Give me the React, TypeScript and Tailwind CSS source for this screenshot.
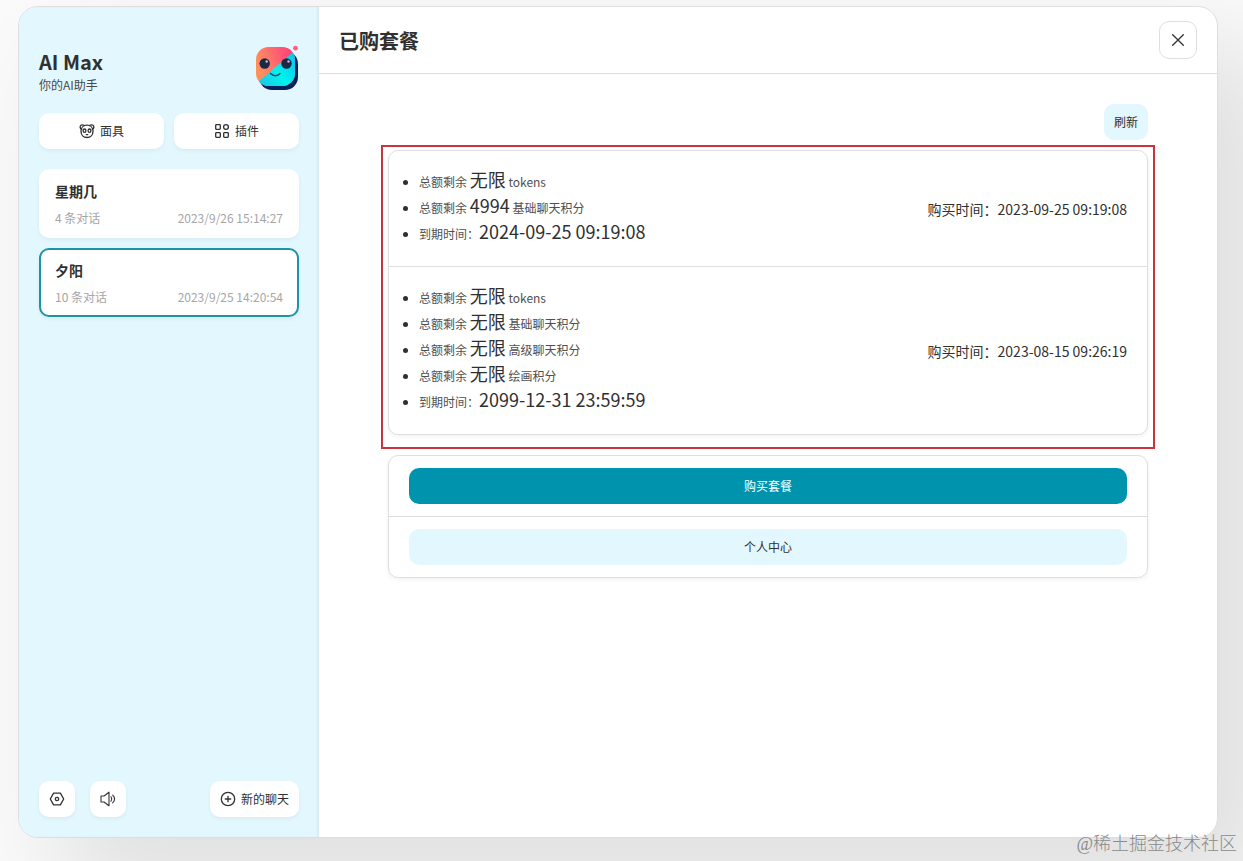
import type { ReactNode } from "react";

const IconButton = ({
  icon,
  text,
  className = "",
}: {
  icon?: ReactNode;
  text?: string;
  className?: string;
}) => (
  <button
    className={`flex h-9 items-center justify-center gap-[5px] rounded-[10px] text-xs ${className}`}
  >
    {icon}
    {text && <span>{text}</span>}
  </button>
);

const svgProps = {
  width: 16,
  height: 16,
  viewBox: "0 0 16 16",
  fill: "none",
  stroke: "#333",
  strokeWidth: 1.33,
  strokeLinecap: "round" as const,
  strokeLinejoin: "round" as const,
};

const MaskIcon = () => (
  <svg {...svgProps}>
    <path d="M2.7 6.2C1.300 5.600 .900 4.400 1.300 3.200C1.900 1.700 4 1.400 5.300 2.600" />
    <path d="M13.300 6.200C14.700 5.600 15.100 4.400 14.700 3.200C14.100 1.700 12 1.400 10.700 2.600" />
    <path d="M8 2.200C4.500 2.200 2 4.700 2 8.200C2 12 4.500 14.500 8 14.500C11.500 14.500 14 12 14 8.200C14 4.700 11.500 2.200 8 2.200Z" />
    <ellipse cx="5.500" cy="7.700" rx="1.400" ry="1.700" />
    <ellipse cx="10.500" cy="7.700" rx="1.400" ry="1.700" />
    <path d="M7.300 11.600H8.700" />
  </svg>
);

const PluginIcon = () => (
  <svg {...svgProps}>
    <rect x="1.700" y="1.700" width="4.600" height="4.600" rx=".7" />
    <rect x="1.700" y="9.700" width="4.600" height="4.600" rx=".7" />
    <circle cx="12" cy="4" r="2.400" />
    <rect x="9.700" y="9.700" width="4.600" height="4.600" rx=".7" />
  </svg>
);

const SettingsIcon = () => (
  <svg {...svgProps}>
    <path d="M4.600 2.200H11.400L14.700 8L11.400 13.800H4.600L1.300 8Z" />
    <circle cx="8" cy="8" r="1.700" />
  </svg>
);

const SoundIcon = () => (
  <svg {...svgProps} strokeWidth={1.1}>
    <path d="M1 5H4L9 1.200V14.800L4 11H1Z" />
    <path d="M11 5.800Q12.500 8 11 10.200" />
    <path d="M12.700 4.200Q16.500 8 12.700 11.800" />
  </svg>
);

const AddIcon = () => (
  <svg {...svgProps}>
    <circle cx="8" cy="8" r="6.700" />
    <path d="M8 5.300V10.700M5.300 8H10.700" />
  </svg>
);

const CloseIcon = () => (
  <svg {...svgProps}>
    <path d="M2.700 2.700L13.300 13.300M13.300 2.700L2.700 13.300" />
  </svg>
);

const Logo = () => (
  <svg className="-mt-px" width="44" height="46" viewBox="0 0 44 46">
    <defs>
      <linearGradient id="warm" x1="0" y1="0.3" x2="1" y2="0">
        <stop offset="0" stopColor="#ff925c" />
        <stop offset=".45" stopColor="#ff6470" />
        <stop offset="1" stopColor="#ff2b7d" />
      </linearGradient>
      <linearGradient id="cool" x1="0" y1="1" x2="1" y2="0.2">
        <stop offset="0" stopColor="#26b9e8" />
        <stop offset=".5" stopColor="#00f2ee" />
        <stop offset="1" stopColor="#10bdea" />
      </linearGradient>
      <clipPath id="face">
        <rect x="1" y="3" width="39" height="39" rx="12.500" />
      </clipPath>
    </defs>
    <rect x="4" y="7" width="39" height="39" rx="13" fill="#08205c" />
    <g clipPath="url(#face)">
      <rect width="44" height="46" fill="url(#warm)" />
      <path d="M44 3L3 38V46H44Z" fill="url(#cool)" />
    </g>
    <circle cx="9.700" cy="19.500" r="5.200" fill="#1b2947" />
    <circle cx="31.500" cy="19.500" r="5.200" fill="#1b2947" />
    <circle cx="11.700" cy="17.500" r="1.200" fill="#b9c3d6" />
    <circle cx="33.500" cy="17.500" r="1.200" fill="#b9c3d6" />
    <path
      d="M15.500 29.500Q20.500 34 25 29.500"
      fill="none"
      stroke="#204068"
      strokeWidth="1.500"
      strokeLinecap="round"
    />
    <circle cx="40.500" cy="4.200" r="2.400" fill="#ff5d83" />
  </svg>
);

const ChatItem = ({
  title,
  count,
  time,
  selected,
}: {
  title: string;
  count: number;
  time: string;
  selected?: boolean;
}) => (
  <div
    className={`h-[69px] rounded-[10px] border-2 bg-white px-3.5 pt-2.5 shadow-[0_2px_4px_rgba(0,0,0,0.05)] ${
      selected ? "border-[#1d93a3]" : "border-white"
    }`}
  >
    <div className="text-sm leading-5 font-bold">{title}</div>
    <div className="mt-[9px] flex justify-between text-xs leading-4 text-[#a6a6a6]">
      <span>{count} 条对话</span>
      <span>{time}</span>
    </div>
  </div>
);

type Plan = {
  quotas: { amount: string; unit: string }[];
  expires: string;
  bought: string;
};

const plans: Plan[] = [
  {
    quotas: [
      { amount: "无限", unit: "tokens" },
      { amount: "4994", unit: "基础聊天积分" },
    ],
    expires: "2024-09-25 09:19:08",
    bought: "2023-09-25 09:19:08",
  },
  {
    quotas: [
      { amount: "无限", unit: "tokens" },
      { amount: "无限", unit: "基础聊天积分" },
      { amount: "无限", unit: "高级聊天积分" },
      { amount: "无限", unit: "绘画积分" },
    ],
    expires: "2099-12-31 23:59:59",
    bought: "2023-08-15 09:26:19",
  },
];

const PlanLine = ({ children }: { children: ReactNode }) => (
  <li className="flex h-[26px] items-center">
    <span className="mr-[11px] size-[5px] rounded-full bg-[#303030]" />
    <span className="text-xs leading-[26px] whitespace-pre text-[#505050]">{children}</span>
  </li>
);

const Amount = ({ children }: { children: ReactNode }) => (
  <span className="text-lg leading-none text-[#303030]">{children}</span>
);

const PlanItem = ({ plan }: { plan: Plan }) => (
  <div className="flex items-center justify-between border-b border-[#dedede] pt-[18px] pr-5 pb-[19px] pl-3.5 last:border-b-0">
    <ul>
      {plan.quotas.map((q) => (
        <PlanLine key={q.unit}>
          总额剩余 <Amount>{q.amount}</Amount> {q.unit}
        </PlanLine>
      ))}
      <PlanLine>
        到期时间：<Amount>{plan.expires}</Amount>
      </PlanLine>
    </ul>
    <div className="pt-0.5 text-sm">购买时间：{plan.bought}</div>
  </div>
);

const listClass =
  "rounded-[10px] border border-[#dedede] bg-white shadow-[0_2px_4px_rgba(0,0,0,0.05)]";
const cardButton = "bg-white shadow-[0_2px_4px_rgba(0,0,0,0.05)]";

export default function App() {
  return (
    <div className="relative h-[861px] overflow-hidden bg-[#fafafa] pt-1.5 pl-[18px] font-['Noto_Sans_CJK_SC',sans-serif] text-[#303030]">
      <div className="flex h-[832px] w-[1200px] overflow-hidden rounded-[20px] border border-[#dedede] bg-white shadow-[50px_50px_100px_10px_rgba(0,0,0,0.1)]">
        <aside className="flex w-[300px] shrink-0 flex-col bg-[#e3f7fe] p-5 shadow-[inset_-2px_0_2px_rgba(0,0,0,0.05)]">
          <div className="flex h-[86px] justify-between pt-[18px]">
            <div className="pt-[7px]">
              <h1 className="text-xl leading-[20px] font-bold">AI Max</h1>
              <p className="mt-[5px] text-xs leading-4 text-[#484848]">你的AI助手</p>
            </div>
            <Logo />
          </div>
          <div className="flex gap-2.5">
            <IconButton icon={<MaskIcon />} text="面具" className={`flex-1 ${cardButton}`} />
            <IconButton icon={<PluginIcon />} text="插件" className={`flex-1 ${cardButton}`} />
          </div>
          <div className="mt-5 flex flex-1 flex-col gap-2.5">
            <ChatItem title="星期几" count={4} time="2023/9/26 15:14:27" />
            <ChatItem title="夕阳" count={10} time="2023/9/25 14:20:54" selected />
          </div>
          <div className="flex">
            <IconButton icon={<SettingsIcon />} className={`w-9 ${cardButton}`} />
            <IconButton icon={<SoundIcon />} className={`ml-[15px] w-9 ${cardButton}`} />
            <IconButton
              icon={<AddIcon />}
              text="新的聊天"
              className={`ml-auto w-[89px] ${cardButton}`}
            />
          </div>
        </aside>

        <main className="flex-1">
          <header className="flex h-[67px] items-center justify-between border-b border-[#dedede] px-5">
            <h2 className="pt-0.5 text-xl leading-none font-bold">已购套餐</h2>
            <button className="flex size-[38px] items-center justify-center rounded-[10px] border border-[#dedede]">
              <CloseIcon />
            </button>
          </header>

          <div className="mx-auto w-[760px] pt-[30px]">
            <IconButton text="刷新" className="ml-auto w-11 bg-[#e3f7fe]" />
            <div className="relative mt-2.5">
              <div className={listClass}>
                {plans.map((plan) => (
                  <PlanItem key={plan.bought} plan={plan} />
                ))}
              </div>
              <div className="absolute -top-[5px] -right-[7px] -bottom-3.5 -left-[7px] border-2 border-[#c9343e]" />
            </div>
            <div className={`mt-5 ${listClass}`}>
              <div className="border-b border-[#dedede] px-5 py-3">
                <IconButton text="购买套餐" className="w-full bg-[#0093ad] text-white" />
              </div>
              <div className="px-5 py-3">
                <IconButton text="个人中心" className="w-full bg-[#e3f7fe]" />
              </div>
            </div>
          </div>
        </main>
      </div>
      <div className="absolute right-1.5 bottom-[5px] font-['Liberation_Serif','Noto_Sans_CJK_SC',serif] text-lg leading-6 font-light text-[#8a8a8a]">
        @稀土掘金技术社区
      </div>
    </div>
  );
}
